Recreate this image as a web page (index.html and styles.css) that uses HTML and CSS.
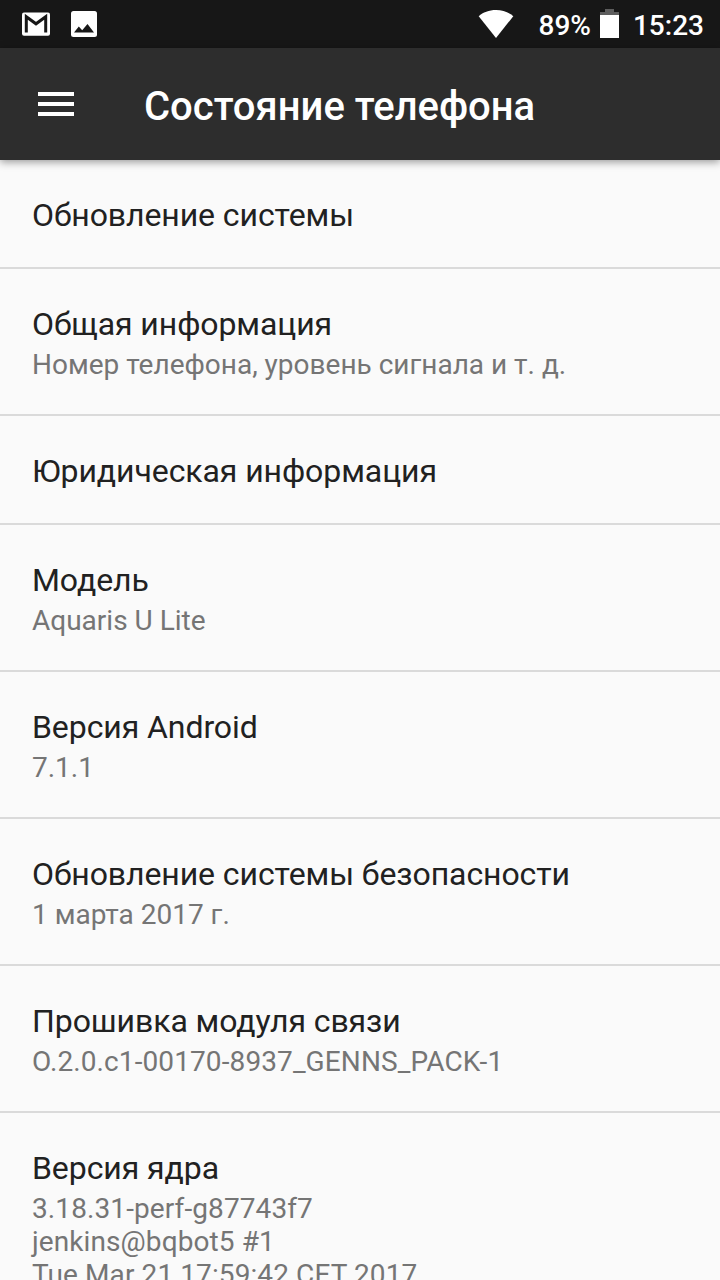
FILE: index.html
```html
<!DOCTYPE html>
<html lang="ru">
<head>
    <meta charset="UTF-8">
    <meta name="viewport" content="width=device-width, initial-scale=1.0">
    <title>Состояние телефона</title>
    <link rel="stylesheet" href="styles.css">
</head>
<body>
<div class="status-bar">
    <svg class="icon-mail" width="28" height="24" viewBox="0 0 28 24">
        <rect width="28" height="23.2" y="0.6" rx="2" fill="#fff"/>
        <path d="M4.3 20.6V4.8L14 11.8L23.7 4.8V20.6" fill="none" stroke="#171717" stroke-width="3"/>
    </svg>
    <svg class="icon-image" width="26" height="26" viewBox="0 0 26 26">
        <rect width="26" height="26" rx="2.5" fill="#fff"/>
        <path d="M3 21.5L7.8 15.5L11.2 19.3L16.5 13L23 21.5Z" fill="#171717"/>
    </svg>
    <svg class="icon-wifi" width="36" height="28" viewBox="0 0 36 28">
        <path d="M18 28L0.7 6.2C5 2.3 11 0 18 0S31 2.3 35.3 6.2Z" fill="#fff"/>
    </svg>
    <span class="battery-level">89%</span>
    <svg class="icon-battery" width="19" height="29" viewBox="0 0 19 29">
        <path d="M5 0H14V3H19V6H0V3H5Z" fill="#5d5d5d"/>
        <rect y="6" width="19" height="23" fill="#fff"/>
    </svg>
    <span class="clock">15:23</span>
</div>

<header class="toolbar">
    <button class="menu-btn" aria-label="Меню">
        <svg width="36" height="24" viewBox="0 0 36 24">
            <path d="M0 0H36V4H0ZM0 10H36V14H0ZM0 20H36V24H0Z" fill="#fff"/>
        </svg>
    </button>
    <h1>Состояние телефона</h1>
</header>

<ul class="list">
    <li>
        <h2>Обновление системы</h2>
    </li>
    <li>
        <h2>Общая информация</h2>
        <p>Номер телефона, уровень сигнала и т. д.</p>
    </li>
    <li>
        <h2>Юридическая информация</h2>
    </li>
    <li>
        <h2>Модель</h2>
        <p>Aquaris U Lite</p>
    </li>
    <li>
        <h2>Версия Android</h2>
        <p>7.1.1</p>
    </li>
    <li>
        <h2>Обновление системы безопасности</h2>
        <p>1 марта 2017 г.</p>
    </li>
    <li>
        <h2>Прошивка модуля связи</h2>
        <p class="build">O.2.0.c1-00170-8937_GENNS_PACK-1</p>
    </li>
    <li>
        <h2>Версия ядра</h2>
        <p class="build">3.18.31-perf-g87743f7<br>jenkins@bqbot5 #1<br>Tue Mar 21 17:59:42 CET 2017</p>
    </li>
</ul>
</body>
</html>
```
FILE: styles.css
```css
body {
    font-family: Roboto, sans-serif;
    display: flex;
    flex-direction: column;
    height: 100vh;
    margin: 0;
    overflow: hidden;
    background-color: #fafafa;
}

.status-bar {
    display: flex;
    flex-shrink: 0;
    align-items: center;
    height: 48px;
    box-sizing: border-box;
    padding: 0 16px 0 22px;
    background-color: #171717;
    color: #fff;
    font-size: 28px;
    font-weight: 500;
    line-height: 33px;
}

.status-bar span {
    padding-top: 3px;
}

.icon-image {
    margin-left: 21px;
}

.icon-wifi {
    margin-left: auto;
}

.battery-level {
    margin-left: 25px;
}

.icon-battery {
    margin: 0 14px 1px 9px;
}

.toolbar {
    display: flex;
    flex-shrink: 0;
    align-items: center;
    height: 112px;
    background-color: #2d2d2d;
    box-shadow: 0 2px 8px rgba(0, 0, 0, 0.4);
    z-index: 1;
}

.menu-btn {
    display: flex;
    width: 112px;
    padding: 0 38px;
    border: none;
    background: none;
}

.toolbar h1 {
    margin: 0 0 0 32px;
    padding-top: 6px;
    color: #fff;
    font-size: 40px;
    font-weight: 500;
    line-height: 48px;
}

.list {
    flex: 1;
    min-height: 0;
    margin: 0;
    padding: 0;
    overflow: hidden;
    list-style: none;
}

.list li {
    padding: 36px 32px 33px;
    border-bottom: 2px solid #dadada;
}

.list h2 {
    margin: 0;
    color: #212121;
    font-size: 32px;
    font-weight: 400;
    line-height: 38px;
    letter-spacing: -0.08px;
}

.list p {
    margin: 5px 0 0;
    color: #757575;
    font-size: 28px;
    line-height: 33px;
}

.list .build {
    letter-spacing: 0.1px;
}
```
